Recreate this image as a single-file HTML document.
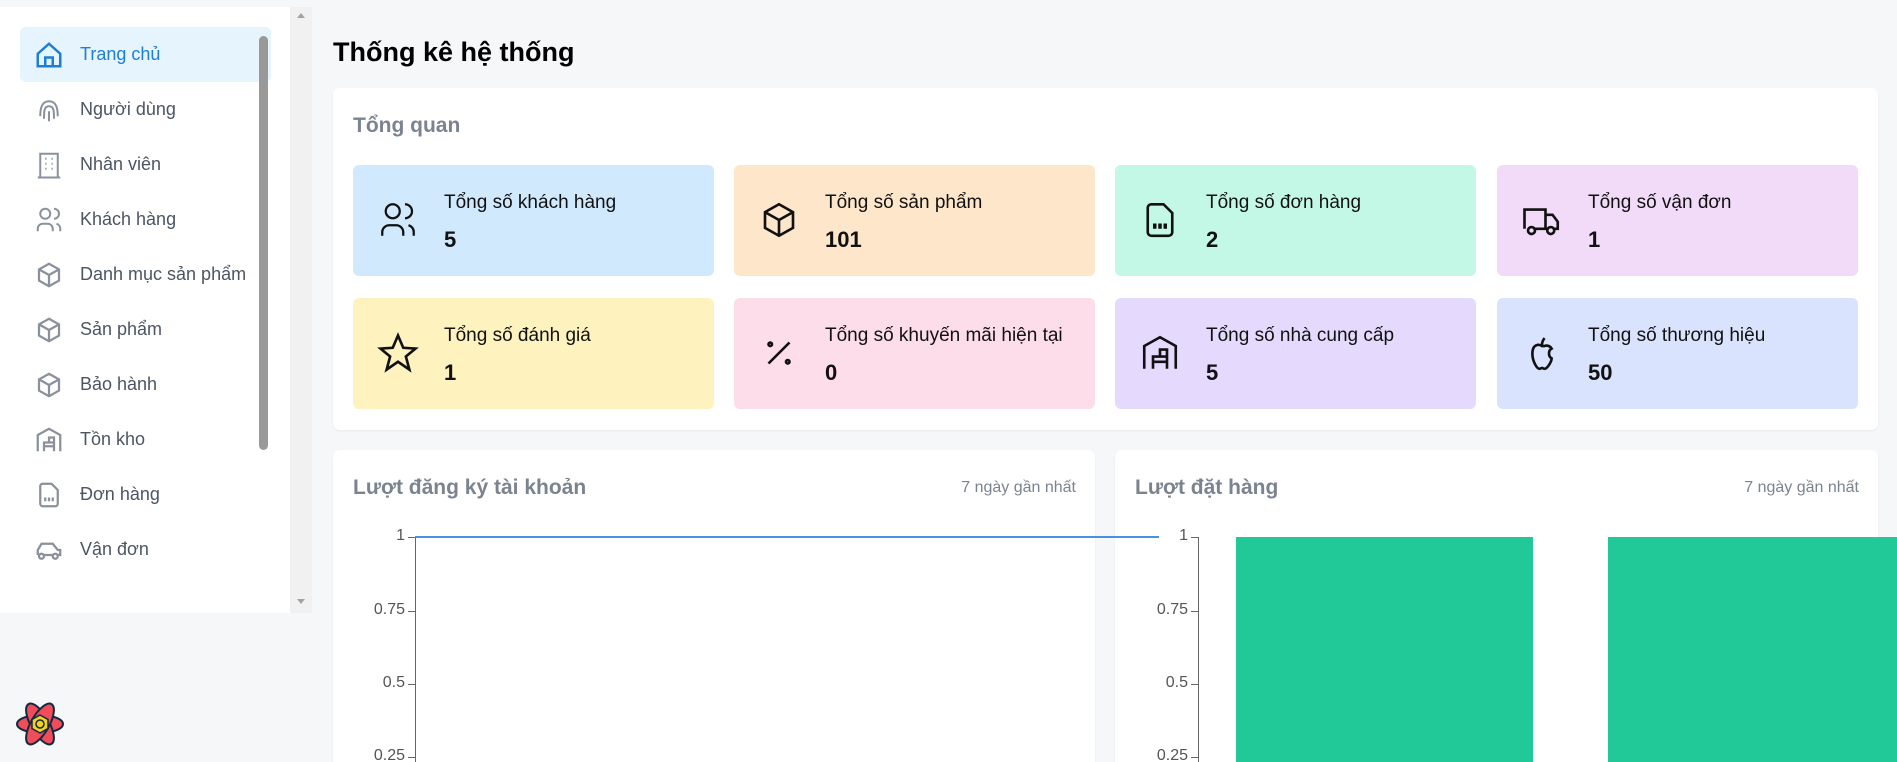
<!DOCTYPE html>
<html><head><meta charset="utf-8"><style>
*{box-sizing:border-box;margin:0;padding:0}
html,body{width:1897px;height:762px;overflow:hidden}
body{background:#f6f7f9;font-family:"Liberation Sans","Noto Sans CJK SC",sans-serif;position:relative}
.side{position:absolute;left:0;top:0;width:290px;height:613px;background:#fff;border-top:7px solid #f6f7f9}
.track{position:absolute;left:290px;top:7px;width:22px;height:606px;background:#f1f1f1}
.thumb{position:absolute;left:259px;top:29px;width:9px;height:414px;background:#999;border-radius:5px}
.item{position:absolute;left:20px;width:251px;height:55px;display:flex;align-items:center;font-size:18px;color:#4b5563}
.item svg{position:absolute;left:14px;width:30px;height:30px}
.item span{position:absolute;left:60px}
.active{background:#e6f4fe;border-radius:6px;color:#1c7ed6}
.h1{position:absolute;left:333px;top:37px;font-size:27px;font-weight:bold;color:#000}
.card{position:absolute;background:#fff;border-radius:7px;box-shadow:0 1px 2px rgba(0,0,0,.06)}
.ct{position:absolute;font-size:21px;font-weight:bold;color:#7b8390}
.box{position:absolute;width:361px;height:111px;border-radius:6px}
.box svg{position:absolute;left:24px;top:34px;width:42px;height:42px}
.lb{position:absolute;left:91px;top:27px;font-size:19px;color:#111}
.vl{position:absolute;left:91px;top:62px;font-size:22px;font-weight:bold;color:#111}
.sub{position:absolute;font-size:16px;color:#7b8390}
.tk{position:absolute;font-size:16px;color:#555;text-align:right;width:60px}
</style></head><body>
<div class="side">
<div class="item active" style="top:20px"><svg viewBox="0 0 24 24" fill="none" stroke="#1c7ed6" stroke-width="2"><path d="M3 11l9-8 9 8v10H3z"/><path d="M9 21v-7h6v7"/></svg><span>Trang chủ</span></div>
<div class="item" style="top:75px"><svg viewBox="0 0 24 24" fill="none" stroke="#8a919c" stroke-width="1.6"><path d="M5 17c0-6 1-12 7-12s7 6 7 12M8 19c0-6 0-10 4-10s4 4 4 10M12 13v8"/></svg><span>Người dùng</span></div>
<div class="item" style="top:130px"><svg viewBox="0 0 24 24" fill="none" stroke="#8a919c" stroke-width="1.6"><path d="M5 22V3h14v19M3 22h18M9 7h1M14 7h1M9 11h1M14 11h1M9 15h1M14 15h1"/></svg><span>Nhân viên</span></div>
<div class="item" style="top:185px"><svg viewBox="0 0 24 24" fill="none" stroke="#8a919c" stroke-width="1.6"><circle cx="9" cy="7" r="4"/><path d="M3 21v-2a4 4 0 014-4h4a4 4 0 014 4v2M16 3a4 4 0 010 8M21 21v-2a4 4 0 00-3-4"/></svg><span>Khách hàng</span></div>
<div class="item" style="top:240px"><svg viewBox="0 0 24 24" fill="none" stroke="#8a919c" stroke-width="1.8"><path d="M12 3l8 4.5v9L12 21l-8-4.5v-9zM12 12l8-4.5M12 12v9M12 12L4 7.5"/></svg><span>Danh mục sản phẩm</span></div>
<div class="item" style="top:295px"><svg viewBox="0 0 24 24" fill="none" stroke="#8a919c" stroke-width="1.8"><path d="M12 3l8 4.5v9L12 21l-8-4.5v-9zM12 12l8-4.5M12 12v9M12 12L4 7.5"/></svg><span>Sản phẩm</span></div>
<div class="item" style="top:350px"><svg viewBox="0 0 24 24" fill="none" stroke="#8a919c" stroke-width="1.8"><path d="M12 3l8 4.5v9L12 21l-8-4.5v-9zM12 12l8-4.5M12 12v9M12 12L4 7.5"/></svg><span>Bảo hành</span></div>
<div class="item" style="top:405px"><svg viewBox="0 0 24 24" fill="none" stroke="#8a919c" stroke-width="1.8"><path d="M3 21V8l9-5 9 5v13M8 21v-7h8v7M8 17h8M12 14V10h4v4"/></svg><span>Tồn kho</span></div>
<div class="item" style="top:460px"><svg viewBox="0 0 24 24" fill="none" stroke="#8a919c" stroke-width="1.8"><path d="M14 3H7a2 2 0 00-2 2v14a2 2 0 002 2h10a2 2 0 002-2V8z"/><path d="M9 17v-3M12 17v-3M15 17v-3"/></svg><span>Đơn hàng</span></div>
<div class="item" style="top:515px"><svg viewBox="0 0 24 24" fill="none" stroke="#8a919c" stroke-width="1.8"><path d="M3 16v-4l3-5h9l4 5h2v4h-2M7 16h8"/><circle cx="6" cy="17" r="2"/><circle cx="17" cy="17" r="2"/></svg><span>Vận đơn</span></div>
<div class="thumb"></div>
</div>
<div class="track"><div style="position:absolute;left:7px;top:6px;border:4px solid transparent;border-bottom:5px solid #a3a3a3;border-top:0"></div><div style="position:absolute;left:7px;top:592px;border:4px solid transparent;border-top:5px solid #a3a3a3;border-bottom:0"></div></div>
<svg style="position:absolute;left:15px;top:700px" width="50" height="48" viewBox="0 0 50 48"><g fill="#f04c5a" stroke="#102a43" stroke-width="2"><ellipse cx="25" cy="24" rx="23" ry="9"/><ellipse cx="25" cy="24" rx="23" ry="9" transform="rotate(60 25 24)"/><ellipse cx="25" cy="24" rx="23" ry="9" transform="rotate(-60 25 24)"/></g><polygon points="25,15 33,19.5 33,28.5 25,33 17,28.5 17,19.5" fill="#f5d020" stroke="#102a43" stroke-width="1.5"/><circle cx="25" cy="24" r="4" fill="none" stroke="#102a43" stroke-width="1.5"/></svg>
<div class="h1">Thống kê hệ thống</div>
<div class="card" style="left:333px;top:88px;width:1545px;height:342px">
<div class="ct" style="left:20px;top:26px">Tổng quan</div>
</div>
<div class="box" style="left:353px;top:165px;background:#d0e9fd"><svg viewBox="0 0 24 24" fill="none" stroke="#111" stroke-width="1.3"><circle cx="9" cy="7" r="4"/><path d="M3 21v-2a4 4 0 014-4h4a4 4 0 014 4v2M16 3a4 4 0 010 8M21 21v-2a4 4 0 00-3-4"/></svg><div class="lb">Tổng số khách hàng</div><div class="vl">5</div></div>
<div class="box" style="left:734px;top:165px;background:#fee6ca"><svg viewBox="0 0 24 24" fill="none" stroke="#111" stroke-width="1.5"><path d="M12 3l8 4.5v9L12 21l-8-4.5v-9zM12 12l8-4.5M12 12v9M12 12L4 7.5"/></svg><div class="lb">Tổng số sản phẩm</div><div class="vl">101</div></div>
<div class="box" style="left:1115px;top:165px;background:#c3f8e7"><svg viewBox="0 0 24 24" fill="none" stroke="#111" stroke-width="1.5"><path d="M14 3H7a2 2 0 00-2 2v14a2 2 0 002 2h10a2 2 0 002-2V8z"/><path d="M9 17v-3M12 17v-3M15 17v-3" stroke-width="2"/></svg><div class="lb">Tổng số đơn hàng</div><div class="vl">2</div></div>
<div class="box" style="left:1497px;top:165px;background:#f2daf9"><svg viewBox="0 0 24 24" fill="none" stroke="#111" stroke-width="1.5"><path d="M2 17V6h12v11M14 9h4l3 4v4h-2M8 17h7"/><circle cx="6" cy="18" r="2"/><circle cx="17" cy="18" r="2"/></svg><div class="lb">Tổng số vận đơn</div><div class="vl">1</div></div>
<div class="box" style="left:353px;top:298px;background:#fef2bf"><svg viewBox="0 0 24 24" fill="none" stroke="#111" stroke-width="1.5"><path d="M12 2l3 7 7 .5-5.5 4.5 2 7.5L12 17l-6.5 4.5 2-7.5L2 9.5 9 9z"/></svg><div class="lb">Tổng số đánh giá</div><div class="vl">1</div></div>
<div class="box" style="left:734px;top:298px;background:#fcdde9"><svg viewBox="0 0 24 24" fill="none" stroke="#111" stroke-width="1.5"><path d="M18 6L6 18"/><circle cx="7" cy="7" r="1"/><circle cx="17" cy="17" r="1"/></svg><div class="lb">Tổng số khuyến mãi hiện tại</div><div class="vl">0</div></div>
<div class="box" style="left:1115px;top:298px;background:#e5dafd"><svg viewBox="0 0 24 24" fill="none" stroke="#111" stroke-width="1.5"><path d="M3 21V8l9-5 9 5v13M8 21v-7h8v7M8 17h8M12 14V10h4v4"/></svg><div class="lb">Tổng số nhà cung cấp</div><div class="vl">5</div></div>
<div class="box" style="left:1497px;top:298px;background:#dae3fd"><svg viewBox="0 0 24 24" fill="none" stroke="#111" stroke-width="1.5"><path d="M12 8c-1.5-1-5.5-1.5-5.5 4.5 0 4 2.5 8.5 4 8.5 1 0 1-.5 1.5-.5s.5.5 1.5.5c1.5 0 4-4 4-6-2-1-2-4.5 0-5.5-1-1.8-3-2-4-1.5zM12 7.5c0-2 .5-3 1.5-4"/></svg><div class="lb">Tổng số thương hiệu</div><div class="vl">50</div></div>

<div class="card" style="left:333px;top:450px;width:762px;height:330px">
<div class="ct" style="left:20px;top:26px">Lượt đăng ký tài khoản</div>
<div class="sub" style="right:19px;top:29px">7 ngày gần nhất</div>
</div>
<div class="card" style="left:1115px;top:450px;width:763px;height:330px">
<div class="ct" style="left:20px;top:26px">Lượt đặt hàng</div>
<div class="sub" style="right:19px;top:29px">7 ngày gần nhất</div>
</div>
<div style="position:absolute;left:415px;top:537px;width:1px;height:240px;background:#666"></div>
<div style="position:absolute;left:1198px;top:537px;width:1px;height:240px;background:#666"></div>
<div class="tk" style="left:345px;top:527px">1</div><div class="tk" style="left:345px;top:601px">0.75</div><div class="tk" style="left:345px;top:674px">0.5</div><div class="tk" style="left:345px;top:747px">0.25</div>
<div class="tk" style="left:1128px;top:527px">1</div><div class="tk" style="left:1128px;top:601px">0.75</div><div class="tk" style="left:1128px;top:674px">0.5</div><div class="tk" style="left:1128px;top:747px">0.25</div>
<div style="position:absolute;left:408px;top:537px;width:7px;height:1px;background:#666"></div>
<div style="position:absolute;left:408px;top:611px;width:7px;height:1px;background:#666"></div>
<div style="position:absolute;left:408px;top:684px;width:7px;height:1px;background:#666"></div>
<div style="position:absolute;left:408px;top:757px;width:7px;height:1px;background:#666"></div>
<div style="position:absolute;left:1191px;top:537px;width:7px;height:1px;background:#666"></div>
<div style="position:absolute;left:1191px;top:611px;width:7px;height:1px;background:#666"></div>
<div style="position:absolute;left:1191px;top:684px;width:7px;height:1px;background:#666"></div>
<div style="position:absolute;left:1191px;top:757px;width:7px;height:1px;background:#666"></div>
<div style="position:absolute;left:415px;top:536px;width:744px;height:2px;background:#4a90e2"></div>
<div style="position:absolute;left:1236px;top:537px;width:297px;height:230px;background:#20c997"></div>
<div style="position:absolute;left:1608px;top:537px;width:289px;height:230px;background:#20c997"></div>
</body></html>
